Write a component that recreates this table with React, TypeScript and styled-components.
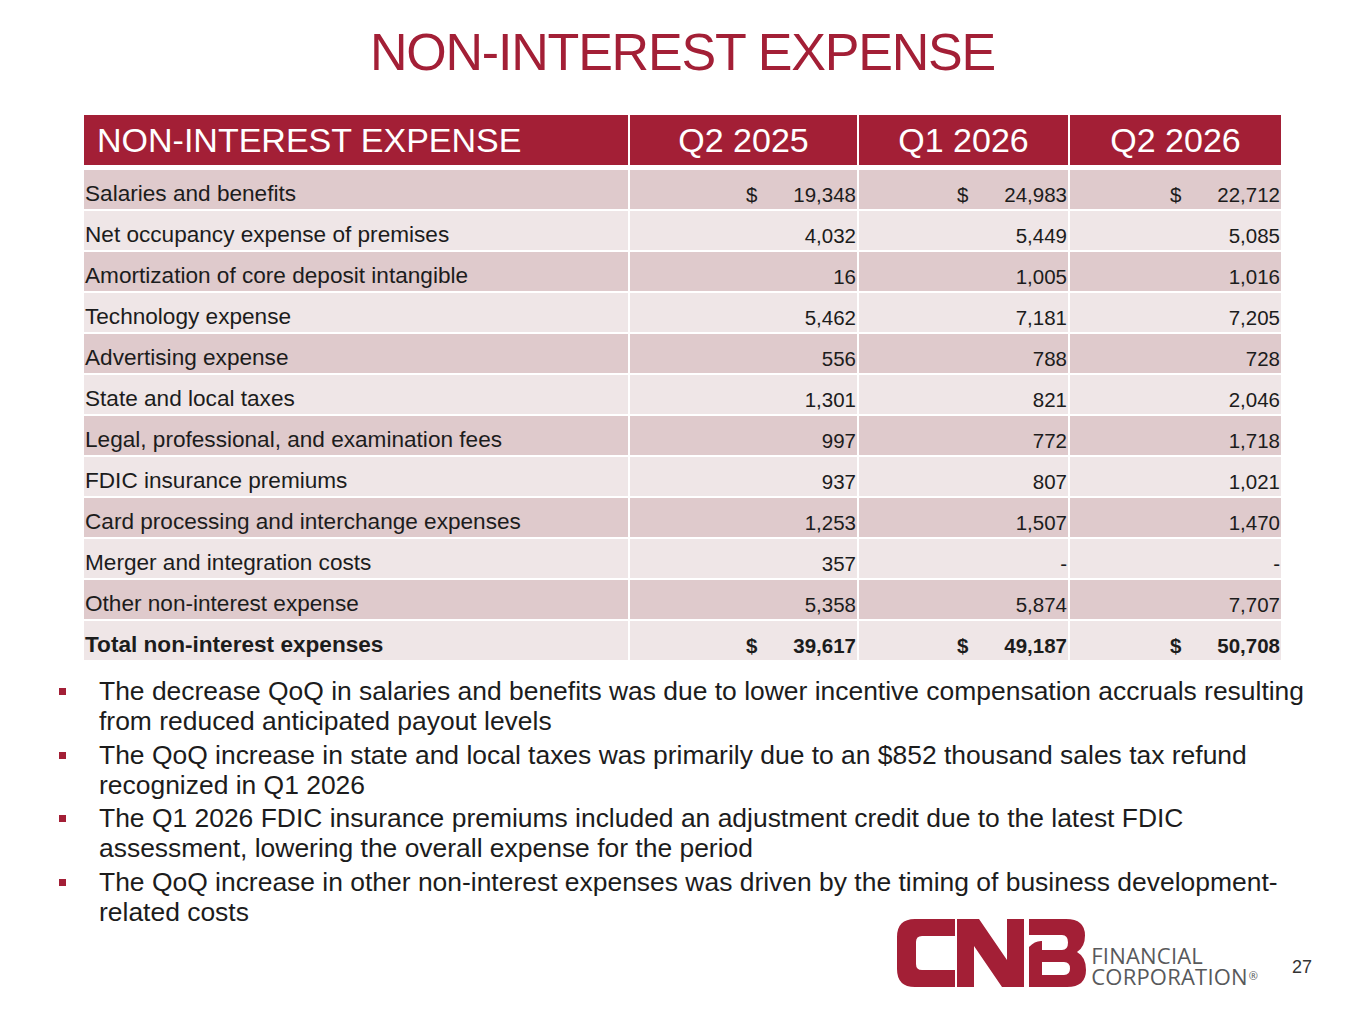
import React from 'react';
import styled, { createGlobalStyle } from 'styled-components';

type ExpenseRow = {
  label: string;
  values: string[];
  dollar?: boolean;
  total?: boolean;
};

const RED = '#a31f36';
const COLUMNS = '544px 227px 209px 211px';

const periods = ['Q2 2025', 'Q1 2026', 'Q2 2026'];

const rows: ExpenseRow[] = [
  { label: 'Salaries and benefits', values: ['19,348', '24,983', '22,712'], dollar: true },
  { label: 'Net occupancy expense of premises', values: ['4,032', '5,449', '5,085'] },
  { label: 'Amortization of core deposit intangible', values: ['16', '1,005', '1,016'] },
  { label: 'Technology expense', values: ['5,462', '7,181', '7,205'] },
  { label: 'Advertising expense', values: ['556', '788', '728'] },
  { label: 'State and local taxes', values: ['1,301', '821', '2,046'] },
  { label: 'Legal, professional, and examination fees', values: ['997', '772', '1,718'] },
  { label: 'FDIC insurance premiums', values: ['937', '807', '1,021'] },
  { label: 'Card processing and interchange expenses', values: ['1,253', '1,507', '1,470'] },
  { label: 'Merger and integration costs', values: ['357', '-', '-'] },
  { label: 'Other non-interest expense', values: ['5,358', '5,874', '7,707'] },
  { label: 'Total non-interest expenses', values: ['39,617', '49,187', '50,708'], dollar: true, total: true },
];

const notes = [
  'The decrease QoQ in salaries and benefits was due to lower incentive compensation accruals resulting from reduced anticipated payout levels',
  'The QoQ increase in state and local taxes was primarily due to an $852 thousand sales tax refund recognized in Q1 2026',
  'The Q1 2026 FDIC insurance premiums included an adjustment credit due to the latest FDIC assessment, lowering the overall expense for the period',
  'The QoQ increase in other non-interest expenses was driven by the timing of business development-related costs',
];

const GlobalStyle = createGlobalStyle`
  html, body {
    margin: 0;
    padding: 0;
    background: #ffffff;
  }
  body {
    font-family: 'Liberation Sans', Arial, sans-serif;
    color: #1c1c1c;
  }
`;

function CnbMark() {
  return (
    <svg width="192" height="72" viewBox="0 0 192 72">
      <g fill={RED}>
        <path d="M60 2 H20 Q2 2 2 20 V52 Q2 70 20 70 H60 V53 H27 Q21 53 21 47 V25 Q21 19 27 19 H60 Z" />
        <path d="M62 2 H84 L112 43 V2 H129 V70 H107 L79 29 V70 H62 Z" />
        <path d="M134 2 H171 Q190 2 190 18.5 Q190 30 182 35 Q191 40 191 53 Q191 70 172 70 H134 Z" />
      </g>
      <g fill="#ffffff">
        <path d="M134 18 H167 Q173 18 173 25.5 Q173 33 167 33 H147 V24 Q140 23.5 134 30 Z" />
        <path d="M147 45 H169 Q175 45 175 51.5 Q175 58 169 58 H147 Z" />
      </g>
    </svg>
  );
}

export default function App() {
  return (
    <Slide>
      <GlobalStyle />
      <Title>NON-INTEREST EXPENSE</Title>

      <Table>
        <HeaderRow>
          <HeaderCell $align="left">NON-INTEREST EXPENSE</HeaderCell>
          {periods.map((p) => (
            <HeaderCell key={p} $align="center">{p}</HeaderCell>
          ))}
        </HeaderRow>

        {rows.map((row, i) => (
          <BodyRow key={row.label} $shade={i % 2 === 0} $total={row.total}>
            <LabelCell>{row.label}</LabelCell>
            {row.values.map((v, j) => (
              <ValueCell key={j}>
                <Amount>
                  <span>{row.dollar ? '$' : ''}</span>
                  <span>{v}</span>
                </Amount>
              </ValueCell>
            ))}
          </BodyRow>
        ))}
      </Table>

      <Notes>
        {notes.map((n) => (
          <Note key={n}>
            <Marker />
            <NoteText>{n}</NoteText>
          </Note>
        ))}
      </Notes>

      <Footer>
        <CnbMark />
        <Wordmark>
          <WordLine>FINANCIAL</WordLine>
          <WordLine>
            CORPORATION<Reg>®</Reg>
          </WordLine>
        </Wordmark>
        <PageNumber>27</PageNumber>
      </Footer>
    </Slide>
  );
}

const Slide = styled.div`
  position: relative;
  width: 1365px;
  height: 1024px;
  overflow: hidden;
  display: flex;
  flex-direction: column;
  align-items: center;
  padding-top: 22px;
  box-sizing: border-box;
`;

const Title = styled.h1`
  margin: 0;
  height: 60px;
  font-size: 52px;
  line-height: 60px;
  font-weight: 400;
  letter-spacing: -1.2px;
  color: ${RED};
`;

const Table = styled.div`
  margin-top: 33px;
  width: 1197px;
  display: flex;
  flex-direction: column;
  gap: 2px;
`;

const HeaderRow = styled.div`
  display: grid;
  grid-template-columns: ${COLUMNS};
  column-gap: 2px;
  height: 50px;
  margin-bottom: 3px;
`;

const HeaderCell = styled.div<{ $align: 'left' | 'center' }>`
  background: ${RED};
  color: #ffffff;
  font-size: 34px;
  display: flex;
  align-items: center;
  justify-content: ${(p) => (p.$align === 'left' ? 'flex-start' : 'center')};
  padding-left: ${(p) => (p.$align === 'left' ? '13px' : '0')};
  white-space: nowrap;
`;

const BodyRow = styled.div<{ $shade: boolean; $total?: boolean }>`
  display: grid;
  grid-template-columns: ${COLUMNS};
  column-gap: 2px;
  height: 39px;
  font-weight: ${(p) => (p.$total ? 700 : 400)};

  & > div {
    background: ${(p) => (p.$shade ? '#dfcacc' : '#efe6e7')};
  }
`;

const LabelCell = styled.div`
  display: flex;
  align-items: flex-end;
  padding: 0 0 3px 1px;
  font-size: 22.6px;
  line-height: 1;
  white-space: nowrap;
`;

const ValueCell = styled.div`
  display: flex;
  align-items: flex-end;
  justify-content: flex-end;
  padding: 0 1px 4px 0;
  font-size: 20.5px;
  line-height: 1;
`;

const Amount = styled.div`
  width: 110px;
  display: flex;
  justify-content: space-between;
`;

const Notes = styled.ul`
  list-style: none;
  margin: 16px 0 0 0;
  padding: 0 0 0 59px;
  align-self: stretch;
  display: flex;
  flex-direction: column;
  gap: 3.5px;
`;

const Note = styled.li`
  display: grid;
  grid-template-columns: 40px 1212px;
  align-items: start;
`;

const Marker = styled.span`
  width: 7px;
  height: 7px;
  margin-top: 12px;
  background: ${RED};
`;

const NoteText = styled.span`
  font-size: 26.45px;
  line-height: 30px;
  color: #1c1c1c;
`;

const Footer = styled.div`
  position: absolute;
  right: 53px;
  bottom: 35px;
  display: flex;
  align-items: flex-end;
`;

const Wordmark = styled.div`
  display: flex;
  flex-direction: column;
  gap: 1px;
  margin: 0 0 3px 4px;
  font-family: 'Open Sans', 'Liberation Sans', sans-serif;
  font-size: 22px;
  font-weight: 500;
  color: #58595b;
  letter-spacing: 0.2px;
`;

const WordLine = styled.span`
  display: block;
  line-height: 20px;
  white-space: nowrap;
`;

const Reg = styled.span`
  font-size: 11px;
  vertical-align: 5px;
  margin-left: 1px;
  letter-spacing: 0;
`;

const PageNumber = styled.div`
  margin: 0 0 12px 34px;
  font-size: 18px;
  line-height: 20px;
  color: #333333;
`;
